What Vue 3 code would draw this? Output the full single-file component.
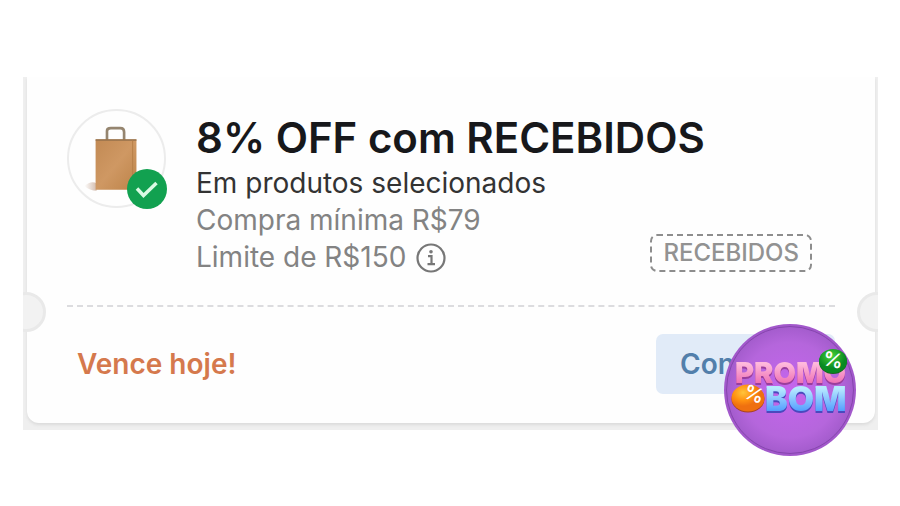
<script setup>
import { ref } from 'vue'

const coupon = ref({
  title: '8% OFF com RECEBIDOS',
  scope: 'Em produtos selecionados',
  minimum: 'Compra mínima R$79',
  limit: 'Limite de R$150',
  code: 'RECEBIDOS',
  expires: 'Vence hoje!'
})
</script>

<template>
  <main class="page">
    <div class="ticket">
      <div class="frame">
        <article class="card">
          <section class="top">
            <div class="thumb">
              <svg viewBox="0 0 100 100" aria-hidden="true">
                <defs>
                  <linearGradient id="paper" x1="0" y1="0" x2="1" y2="1">
                    <stop offset="0" stop-color="#c28a54" />
                    <stop offset="0.5" stop-color="#cf9863" />
                    <stop offset="1" stop-color="#bd8349" />
                  </linearGradient>
                  <linearGradient id="shade" x1="0" y1="0" x2="1" y2="0">
                    <stop offset="0" stop-color="#fff" />
                    <stop offset="1" stop-color="#d3bcae" />
                  </linearGradient>
                </defs>
                <path d="M16 79 Q23 73 29 76 V84 Q22 84 16 79Z" fill="url(#shade)" />
                <path d="M40 31 V21 Q40 18 44 18 H54 Q58 18 58 22 V31" fill="none" stroke="#95856f" stroke-width="2.8" />
                <path d="M28 30 H71 V83 H28Z" fill="url(#paper)" />
                <path d="M28 30.500 H71" stroke="#94704b" stroke-width="1.500" />
                <path d="M67 31 V82" stroke="#b57d48" stroke-width="1" />
              </svg>
              <svg class="check" viewBox="0 0 40 40" aria-hidden="true">
                <circle cx="20" cy="20" r="20" fill="#12a150" />
                <path d="M10 19.500 L16.500 26.500 L29.500 14" fill="none" stroke="#d9fae3" stroke-width="3.500" />
              </svg>
            </div>

            <div class="details">
              <h1>{{ coupon.title }}</h1>
              <p class="scope">{{ coupon.scope }}</p>
              <p>{{ coupon.minimum }}</p>
              <p class="limit">
                {{ coupon.limit }}
                <button class="info" type="button" aria-label="Detalhes">
                  <svg viewBox="0 0 30 30" aria-hidden="true">
                    <circle cx="15" cy="15" r="13.500" fill="none" stroke="#777" stroke-width="2.200" />
                    <circle cx="15" cy="8.800" r="1.800" fill="#777" />
                    <path d="M12 13.200 H15.500 V21 M11.500 21.200 H19" fill="none" stroke="#777" stroke-width="2.200" />
                  </svg>
                </button>
              </p>
            </div>

            <span class="code">{{ coupon.code }}</span>
          </section>

          <section class="bottom">
            <strong class="expires">{{ coupon.expires }}</strong>
            <button class="action" type="button">Conferir</button>
          </section>
        </article>
        <i class="notch left"></i>
        <i class="notch right"></i>
      </div>

      <!-- Store seal -->
      <svg class="seal" viewBox="0 0 132 132" role="img" aria-label="Promo Bom">
        <defs>
          <radialGradient id="disc">
            <stop offset="0" stop-color="#c565ee" />
            <stop offset="0.75" stop-color="#b566dc" />
            <stop offset="1" stop-color="#a45ccd" />
          </radialGradient>
          <linearGradient id="pink" x1="0" y1="0" x2="0" y2="1">
            <stop offset="0.25" stop-color="#ffb9dc" />
            <stop offset="0.8" stop-color="#ee72b5" />
          </linearGradient>
          <linearGradient id="blue" x1="0" y1="0" x2="0" y2="1">
            <stop offset="0.25" stop-color="#b8eaff" />
            <stop offset="0.8" stop-color="#559fff" />
          </linearGradient>
          <radialGradient id="green" cx="0.45" cy="0.3">
            <stop offset="0" stop-color="#4ad236" />
            <stop offset="1" stop-color="#078a22" />
          </radialGradient>
          <radialGradient id="orange" cx="0.35" cy="0.3">
            <stop offset="0" stop-color="#ffc43c" />
            <stop offset="0.6" stop-color="#ff9110" />
            <stop offset="1" stop-color="#ef7010" />
          </radialGradient>
        </defs>
        <circle cx="66" cy="66" r="66" fill="#a258cb" />
        <circle cx="66" cy="66" r="63.500" fill="url(#disc)" stroke="#8645ae" stroke-width="1" />
        <text class="word promo" x="11" y="59" fill="url(#pink)">PROMO</text>
        <ellipse cx="24" cy="75" rx="16.500" ry="13.500" fill="#a54122" />
        <ellipse cx="24" cy="74" rx="16.500" ry="13.500" fill="url(#orange)" />
        <text class="word bom" x="41" y="87" fill="url(#blue)">BOM</text>
        <ellipse cx="109" cy="38" rx="14" ry="12" fill="#17651f" />
        <ellipse cx="109" cy="37" rx="14" ry="12" fill="url(#green)" />
        <text class="percent" x="109" y="43" text-anchor="middle" transform="rotate(12 109 36)">%</text>
        <text class="percent" x="30" y="77" text-anchor="middle" transform="rotate(20 30 70)">%</text>
      </svg>
    </div>
  </main>
</template>

<style>
body {
  margin: 0;
  background: #fff;
}
</style>

<style scoped>
.page {
  padding: 77px 22px 50px 23px;
  font-family: Inter, "Liberation Sans", sans-serif;
}

.ticket {
  position: relative;
}

.frame {
  position: relative;
  overflow: hidden;
  padding: 0 3px 7px 4px;
  background: #efefef;
}

.card {
  padding: 32px 40px 29px;
  border-radius: 0 0 12px 12px;
  background: #fefefe;
  box-shadow: 0 2px 3px #dcdcdc;
}

.top {
  display: flex;
  align-items: flex-start;
  gap: 30px;
  padding: 0 23px 29px 0;
  border-bottom: 2px dashed #dcdcdf;
}

.thumb {
  position: relative;
  flex: none;
  box-sizing: border-box;
  width: 99px;
  height: 99px;
  border: 2px solid #ececec;
  border-radius: 50%;
}

.thumb svg {
  display: block;
}

.thumb .check {
  position: absolute;
  right: -3px;
  bottom: -3px;
  width: 40px;
  height: 40px;
}

.details {
  flex: 1;
  min-width: 0;
  padding-top: 6px;
  white-space: nowrap;
}

h1 {
  margin: 0 0 4px;
  color: #17181b;
  font-size: 42px;
  font-weight: 600;
  line-height: 46px;
}

p {
  margin: 0;
  color: #838383;
  font-size: 28px;
  line-height: 37px;
}

.scope {
  color: #333;
}

.limit {
  display: flex;
  align-items: center;
  gap: 10px;
}

.info {
  width: 30px;
  height: 30px;
  padding: 0;
  border: 0;
  background: none;
}

.info svg {
  display: block;
}

.code {
  align-self: flex-end;
  box-sizing: border-box;
  margin-bottom: 4px;
  padding: 0 11px;
  border: 2px dashed #8d8d8d;
  border-radius: 7px;
  color: #929292;
  font-size: 24px;
  font-weight: 500;
  line-height: 34px;
}

.bottom {
  display: flex;
  align-items: center;
  justify-content: space-between;
  padding: 27px 0 0 10px;
}

.expires {
  color: #d5794d;
  font-size: 28px;
  font-weight: 600;
}

.action {
  width: 179px;
  height: 60px;
  padding: 0 24px;
  border: 0;
  border-radius: 7px;
  background: #e1ebf8;
  color: #527fab;
  font-family: inherit;
  font-size: 28px;
  font-weight: 600;
  text-align: left;
}

.notch {
  position: absolute;
  top: 215px;
  box-sizing: border-box;
  width: 40px;
  height: 40px;
  border: 3px solid #e9e9e9;
  border-radius: 50%;
  background: #f2f2f2;
}

.notch.left {
  left: -17px;
}

.notch.right {
  right: -19px;
}

.seal {
  position: absolute;
  right: 22px;
  bottom: -26px;
  width: 132px;
  height: 132px;
}

.word {
  font-family: Inter, sans-serif;
  font-weight: 900;
}

.promo {
  font-size: 29px;
  filter: drop-shadow(0 2px 0 #9a3d9c);
}

.bom {
  font-size: 34px;
  filter: drop-shadow(0 2px 0 #4a49bd);
}

.percent {
  fill: #fff;
  font-family: Inter, sans-serif;
  font-size: 20px;
  font-weight: 600;
}
</style>
